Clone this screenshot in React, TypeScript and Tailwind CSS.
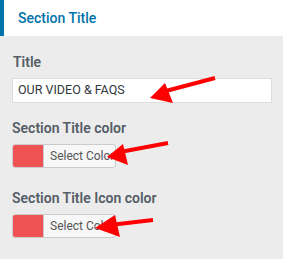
import React from "react";

function ColorButton() {
  return (
    <div className="flex h-[24px] w-[104px] overflow-hidden rounded-[3px] border border-[#cccccc] bg-[#f7f7f7]">
      <div className="w-[30px] shrink-0 bg-[#ee5253]" />
      <div className="flex flex-1 items-center overflow-hidden whitespace-nowrap border-l border-[#cccccc] pl-[6px] text-[12px] text-[#555555]">
        Select Color
      </div>
    </div>
  );
}

export default function App() {
  return (
    <div
      className="relative h-[259px] w-[283px] overflow-hidden bg-[#ececec]"
      style={{ fontFamily: "Roboto, 'Noto Sans', sans-serif" }}
    >
      <div className="flex h-[36px] items-center border-l-[4px] border-[#0073aa] bg-white pl-[14px]">
        <span className="text-[14px] font-medium text-[#0073aa]">Section Title</span>
      </div>
      <div className="px-[12px] pt-[16px]">
        <div className="pl-[1px] text-[14px] leading-[20px] font-semibold text-[#555d66]">Title</div>
        <div className="mt-[6px] flex h-[25px] w-[260px] items-center border border-[#dddddd] bg-white pl-[5px] text-[12.5px] text-[#32373c]">
          OUR VIDEO &amp; FAQS
        </div>
        <div className="mt-[15px] text-[14px] leading-[20px] font-semibold text-[#555d66]">Section Title color</div>
        <div className="mt-[6px]">
          <ColorButton />
        </div>
        <div className="mt-[20px] text-[14px] leading-[20px] font-semibold text-[#555d66]">Section Title Icon color</div>
        <div className="mt-[6px]">
          <ColorButton />
        </div>
      </div>
      <svg className="pointer-events-none absolute left-0 top-0" width="283" height="259" viewBox="0 0 283 259">
        <line x1="215" y1="78" x2="162" y2="92" stroke="#ff0000" strokeWidth="4" />
        <polygon points="150,98 165,83 173,103" fill="#ff0000" />
        <line x1="168" y1="143" x2="120" y2="152" stroke="#ff0000" strokeWidth="4" />
        <polygon points="107,157 123,144 128,165" fill="#ff0000" />
        <line x1="153" y1="220" x2="110" y2="225" stroke="#ff0000" strokeWidth="4" />
        <polygon points="95,228 115,215 120,237" fill="#ff0000" />
      </svg>
    </div>
  );
}
